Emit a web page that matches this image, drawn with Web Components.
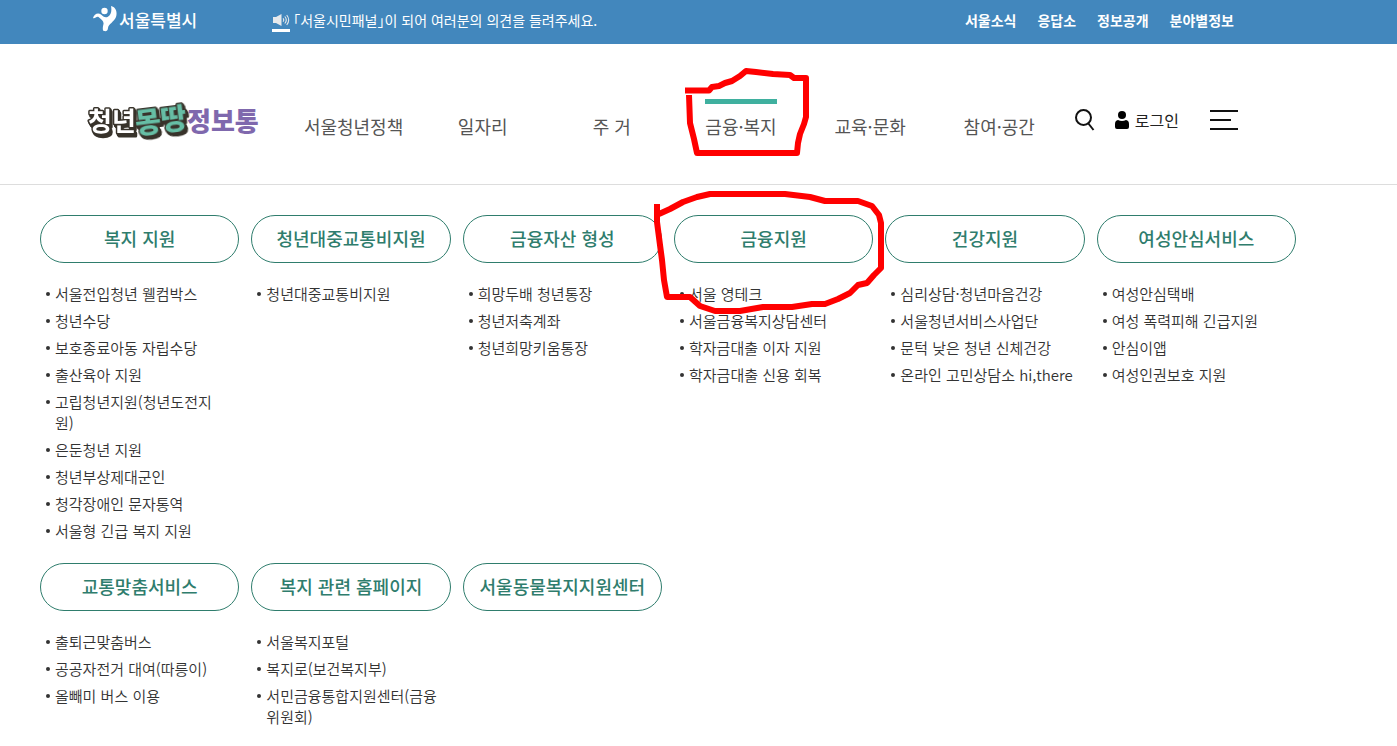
<!DOCTYPE html>
<html lang="ko">
<head>
<meta charset="utf-8">
<title>청년몽땅정보통</title>
<style>
  body {
    margin: 0;
    background: #fff;
    color: #333;
    font-family: "Noto Sans CJK KR", "Noto Sans", sans-serif;
  }
</style>
</head>
<body>
<youth-page>
  <seoul-bar></seoul-bar>
  <site-header></site-header>
  <mega-menu>
    <menu-group>
      <span slot="title">복지 지원</span>
      <menu-item>서울전입청년 웰컴박스</menu-item>
      <menu-item>청년수당</menu-item>
      <menu-item>보호종료아동 자립수당</menu-item>
      <menu-item>출산육아 지원</menu-item>
      <menu-item>고립청년지원(청년도전지원)</menu-item>
      <menu-item>은둔청년 지원</menu-item>
      <menu-item>청년부상제대군인</menu-item>
      <menu-item>청각장애인 문자통역</menu-item>
      <menu-item>서울형 긴급 복지 지원</menu-item>
    </menu-group>
    <menu-group>
      <span slot="title">청년대중교통비지원</span>
      <menu-item>청년대중교통비지원</menu-item>
    </menu-group>
    <menu-group>
      <span slot="title">금융자산 형성</span>
      <menu-item>희망두배 청년통장</menu-item>
      <menu-item>청년저축계좌</menu-item>
      <menu-item>청년희망키움통장</menu-item>
    </menu-group>
    <menu-group>
      <span slot="title">금융지원</span>
      <menu-item>서울 영테크</menu-item>
      <menu-item>서울금융복지상담센터</menu-item>
      <menu-item>학자금대출 이자 지원</menu-item>
      <menu-item>학자금대출 신용 회복</menu-item>
    </menu-group>
    <menu-group>
      <span slot="title">건강지원</span>
      <menu-item>심리상담·청년마음건강</menu-item>
      <menu-item>서울청년서비스사업단</menu-item>
      <menu-item>문턱 낮은 청년 신체건강</menu-item>
      <menu-item>온라인 고민상담소 hi,there</menu-item>
    </menu-group>
    <menu-group>
      <span slot="title">여성안심서비스</span>
      <menu-item>여성안심택배</menu-item>
      <menu-item>여성 폭력피해 긴급지원</menu-item>
      <menu-item>안심이앱</menu-item>
      <menu-item>여성인권보호 지원</menu-item>
    </menu-group>
    <menu-group>
      <span slot="title">교통맞춤서비스</span>
      <menu-item>출퇴근맞춤버스</menu-item>
      <menu-item>공공자전거 대여(따릉이)</menu-item>
      <menu-item>올빼미 버스 이용</menu-item>
    </menu-group>
    <menu-group>
      <span slot="title">복지 관련 홈페이지</span>
      <menu-item>서울복지포털</menu-item>
      <menu-item>복지로(보건복지부)</menu-item>
      <menu-item>서민금융통합지원센터(금융위원회)</menu-item>
    </menu-group>
    <menu-group>
      <span slot="title">서울동물복지지원센터</span>
    </menu-group>
  </mega-menu>
  <pen-marks></pen-marks>
</youth-page>

<script>
class YouthPage extends HTMLElement {
  constructor () {
    super()
    this.attachShadow({ mode: 'open' }).innerHTML = `
      <style>
        :host { display: block; position: relative; }
      </style>
      <slot></slot>
    `
  }
}

class SeoulBar extends HTMLElement {
  constructor () {
    super()
    this.attachShadow({ mode: 'open' }).innerHTML = `
      <style>
        :host {
          display: flex;
          align-items: center;
          min-height: 40px;
          padding: 0 163px 4px 93px;
          background: #4287bd;
          color: #fff;
          font-size: 14px;
          line-height: 20px;
        }
        a { color: inherit; text-decoration: none; }
        .seoul {
          display: flex;
          align-items: center;
          gap: 2px;
          font-size: 17px;
          font-weight: 500;
        }
        .notice {
          display: flex;
          align-items: center;
          gap: 3px;
          margin-left: 75px;
          font-feature-settings: "halt";
        }
        .speaker {
          display: block;
          padding: 6px 0 3px;
          border-bottom: 3px solid #fff;
        }
        svg { display: block; }
        nav {
          display: flex;
          gap: 21px;
          margin-left: auto;
          font-weight: 700;
        }
      </style>
      <a class="seoul" href="#">
        <svg width="24" height="28" viewBox="0 0 24 28" fill="#fff" aria-hidden="true">
          <circle cx="11.500" cy="5" r="3.200"/>
          <path d="M0 12C1 8 5 6 8 8.500 10 10.500 12 12 14.500 11 18 9 19 5 18 0 23 1 24.500 6 23 11 21 16 15.500 18 15 22 14.800 25 13 25.500 11 25 9 24.500 10 20 10.500 18 11 15 8 13.500 5.500 11 3.500 10 2 13 0 12z"/>
        </svg>
        <span>서울특별시</span>
      </a>
      <div class="notice">
        <span class="speaker">
          <svg width="18" height="12" viewBox="0 0 18 12" aria-hidden="true">
            <path d="M1 3h3L9.500 0v12L4 9H1z" fill="#e6e9ec"/>
            <path d="M11 4.300q1.500 1.700 0 3.400M12.800 2.500q3 3.500 0 7M14.700 1q4 5 0 10" fill="none" stroke="#e6e9ec" stroke-width="1.100"/>
          </svg>
        </span>
        <span>「서울시민패널」이 되어 여러분의 의견을 들려주세요.</span>
      </div>
      <nav>
        <a href="#">서울소식</a>
        <a href="#">응답소</a>
        <a href="#">정보공개</a>
        <a href="#">분야별정보</a>
      </nav>
    `
  }
}

class SiteHeader extends HTMLElement {
  constructor () {
    super()
    this.attachShadow({ mode: 'open' }).innerHTML = `
      <style>
        :host {
          display: flex;
          align-items: center;
          padding: 54px 159px 42px 88px;
          border-bottom: 1px solid #ddd;
        }
        a { color: inherit; text-decoration: none; }
        svg { display: block; overflow: visible; }
        .logo text { font-size: 26px; font-weight: 900; }
        .logo .youth { font-weight: 700; }
        .logo .all { font-size: 28px; }
        .outlined {
          stroke: #38332b;
          stroke-width: 3px;
          stroke-linejoin: round;
          paint-order: stroke;
          filter: drop-shadow(1px 1px 0 #38332b) drop-shadow(1px 2px 0 #38332b);
        }
        button {
          padding: 0;
          border: 0;
          background: none;
        }
        nav {
          display: grid;
          grid-template-columns: repeat(6, 1fr);
          flex: 1;
          margin: 0 11px 0 30px;
          padding-bottom: 2px;
          font-size: 18px;
          line-height: 26px;
          color: #555;
          text-align: center;
        }
        nav a {
          justify-self: center;
          padding-top: 9px;
          border-top: 5px solid transparent;
        }
        nav a.on { border-top-color: #3fb09f; }
        .tools {
          display: flex;
          align-items: center;
        }
        .login {
          display: flex;
          align-items: center;
          gap: 6px;
          margin: 0 31px 0 20px;
          font-size: 16px;
          line-height: 24px;
          color: #222;
        }
      </style>
      <a class="logo" href="#">
        <svg width="171" height="44" viewBox="0 0 171 44">
          <text class="youth outlined" x="0" y="33" fill="#fff">청년</text>
          <text class="all outlined" x="47" y="33" fill="#66bea5" transform="rotate(-7 72 22)">몽땅</text>
          <text x="99" y="33" fill="#7f68ad">정보통</text>
        </svg>
      </a>
      <nav>
        <a href="#">서울청년정책</a>
        <a href="#">일자리</a>
        <a href="#">주 거</a>
        <a href="#" class="on">금융·복지</a>
        <a href="#">교육·문화</a>
        <a href="#">참여·공간</a>
      </nav>
      <div class="tools">
        <button type="button" aria-label="검색">
          <svg width="20" height="22" viewBox="0 0 20 22" fill="none" stroke="#111" stroke-width="2">
            <circle cx="8.500" cy="8.500" r="7.500"/>
            <path d="M13 14l5.500 7"/>
          </svg>
        </button>
        <a class="login" href="#">
          <svg width="14" height="18" viewBox="0 0 14 18" aria-hidden="true">
            <circle cx="7" cy="4" r="4"/>
            <path d="M0 13q0-3.500 3-4 4 2 8 0 3 .5 3 4v3q0 2-2 2H2q-2 0-2-2z"/>
          </svg>
          <span>로그인</span>
        </a>
        <button type="button" aria-label="전체메뉴">
          <svg width="28" height="20" viewBox="0 0 28 20" fill="#111">
            <path d="M0 0h28v2H0zM0 9h21v2H0zM0 18h28v2H0z"/>
          </svg>
        </button>
      </div>
    `
  }
}

class MegaMenu extends HTMLElement {
  constructor () {
    super()
    this.attachShadow({ mode: 'open' }).innerHTML = `
      <style>
        :host {
          display: grid;
          grid-template-columns: repeat(6, 1fr);
          gap: 16px 12px;
          padding: 30px 101px 12px 40px;
        }
      </style>
      <slot></slot>
    `
  }
}

class MenuGroup extends HTMLElement {
  constructor () {
    super()
    this.attachShadow({ mode: 'open' }).innerHTML = `
      <style>
        :host { display: block; min-width: 0; }
        .title {
          display: block;
          padding-bottom: 2px;
          border: 1px solid #2f7d6d;
          border-radius: 24px;
          color: #2f7d6d;
          font-size: 18px;
          font-weight: 500;
          line-height: 44px;
          text-align: center;
          text-decoration: none;
          white-space: nowrap;
        }
        .list { padding: 20px 10px 0 6px; }
      </style>
      <a class="title" href="#"><slot name="title"></slot></a>
      <div class="list" role="list"><slot></slot></div>
    `
  }
}

class MenuItem extends HTMLElement {
  constructor () {
    super()
    this.attachShadow({ mode: 'open' }).innerHTML = `
      <style>
        :host {
          display: flex;
          gap: 5px;
          margin-bottom: 6px;
          font-size: 15px;
          font-weight: 350;
          line-height: 21px;
        }
        :host::before {
          content: "";
          flex: none;
          width: 4px;
          height: 4px;
          margin-top: 9px;
          border-radius: 50%;
          background: #333;
        }
        a { color: inherit; text-decoration: none; }
      </style>
      <a href="#"><slot></slot></a>
    `
  }

  connectedCallback () {
    this.setAttribute('role', 'listitem')
  }
}

// hand-drawn circles lying over the menu
class PenMarks extends HTMLElement {
  constructor () {
    super()
    this.attachShadow({ mode: 'open' }).innerHTML = `
      <style>
        :host {
          position: absolute;
          top: 0;
          left: 0;
          pointer-events: none;
        }
        svg { display: block; }
      </style>
      <svg width="900" height="330" viewBox="0 0 900 330" fill="none" stroke="#f00" stroke-width="6" stroke-linejoin="round" aria-hidden="true">
        <path d="M685 90.500H709L712 87 719 86 725 83 732 81 740 76 746 71 756 72 773 74 790 75 794 78H806V117L804 124 800 134 798 143 797 153H697L694 139 690 123 689 95"/>
        <path d="M657 204V222L660 245 662 260 664 280 667 297H690L700 306 715 311H740L763 307H792L812 304H825L838 299 850 293 858 285 867 283 874 275 881 268V223L879 215 872 206 858 201H825L810 197 785 194H710L697 197 683 202 670 209 659 214"/>
      </svg>
    `
  }
}

customElements.define('youth-page', YouthPage)
customElements.define('seoul-bar', SeoulBar)
customElements.define('site-header', SiteHeader)
customElements.define('mega-menu', MegaMenu)
customElements.define('menu-group', MenuGroup)
customElements.define('menu-item', MenuItem)
customElements.define('pen-marks', PenMarks)
</script>
</body>
</html>
